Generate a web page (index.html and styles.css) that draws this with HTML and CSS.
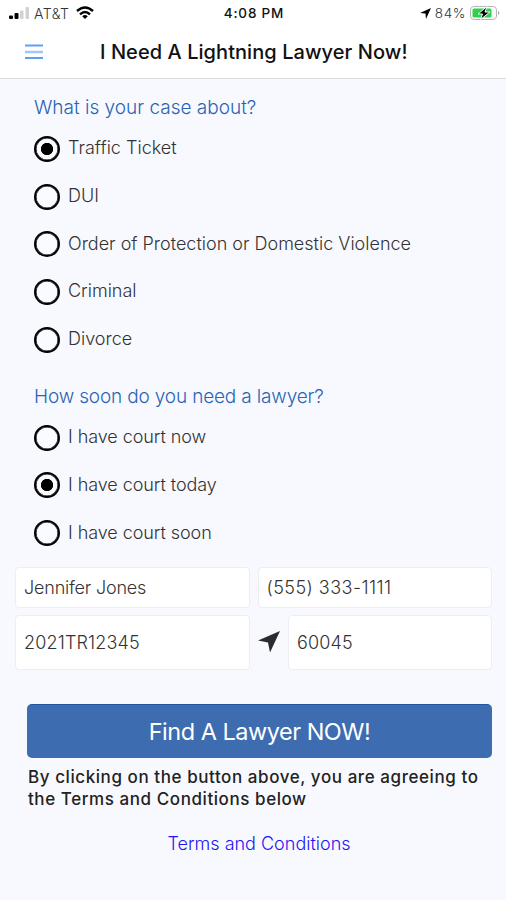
FILE: index.html
```html
<!DOCTYPE html>
<html lang="en">
<head><meta charset="utf-8"><title>I Need A Lightning Lawyer Now!</title><link rel="stylesheet" href="styles.css"></head>
<body>
<header>
<div class="status">
<div class="carrier"><svg width="22" height="13" viewBox="0 0 22 13"><rect x="1" y="8.500" width="4" height="3.500" rx="1"/><rect x="6.500" y="6" width="4" height="6" rx="1"/><rect x="12" y="3.500" width="3.500" height="8.500" rx="1" fill="#d2d2d2"/><rect x="17.500" y="0" width="3.500" height="12" rx="1" fill="#d2d2d2"/></svg><span class="network">AT&amp;T</span><svg class="wifi" width="18" height="14" viewBox="0 0 18 14" fill="none" stroke="#000" stroke-width="2.400"><path d="M1 5Q9-2 17 5M4 8.300Q9 3.700 14 8.300"/><path d="M6.200 10.200Q9 7.900 11.800 10.200L9 13Z" fill="#000" stroke="none"/></svg></div>
<span class="time">4:08 PM</span>
<div class="power"><svg width="11" height="11" viewBox="0 0 11 11"><path d="M0 5L11 0 6 11 5.500 5.500Z"/></svg><span class="percent">84%</span><svg width="30" height="15" viewBox="0 0 30 15"><rect x=".5" y=".5" width="26" height="13" rx="3.500" fill="#fff" stroke="#b5b5b5"/><rect x="2.500" y="2.500" width="19" height="9" rx="1.500" fill="#2fd050"/><path d="M28 5q3 2 0 4z" fill="#aaa"/><path d="M17 .5L8 8h4.500l-2 5.500L20 6h-5z" stroke="#fff" stroke-width="1"/></svg></div>
</div>
<div class="title"><svg class="menu" width="18" height="16" viewBox="0 0 18 16" stroke="#5d9ff2" stroke-width="2"><path d="M0 1.500H18M0 14H18"/><path d="M0 8H18" stroke="#a3c5f7" stroke-width="2.500"/></svg><h1>I Need A Lightning Lawyer Now!</h1></div>
</header>
<main>
<h2>What is your case about?</h2>
<div class="options"><label><i class="radio on"></i><span>Traffic Ticket</span></label><label><i class="radio"></i><span>DUI</span></label><label><i class="radio"></i><span>Order of Protection or Domestic Violence</span></label><label><i class="radio"></i><span>Criminal</span></label><label><i class="radio"></i><span>Divorce</span></label></div>
<h2 class="second">How soon do you need a lawyer?</h2>
<div class="options soon"><label><i class="radio"></i><span>I have court now</span></label><label><i class="radio on"></i><span>I have court today</span></label><label><i class="radio"></i><span>I have court soon</span></label></div>
<div class="fields"><div class="field name">Jennifer Jones</div><div class="field phone">(555) 333-1111</div></div>
<div class="fields case"><div class="field">2021TR12345</div><svg width="22" height="22" viewBox="0 0 22 22"><path d="M0 9.500L22 0 12 21.500 10 11.500Z" fill="#2b2b2b"/></svg><div class="field">60045</div></div>
<button>Find A Lawyer NOW!</button>
<p>By clicking on the button above, you are agreeing to<br>the Terms and Conditions below</p>
<a>Terms and Conditions</a>
</main>
</body></html>
```
FILE: styles.css
```css
*{box-sizing:border-box}
body{margin:0;height:900px;overflow:hidden;background:#f8f9ff;font-family:Inter,"Liberation Sans",sans-serif;color:#333}
header{height:79px;background:#fff;border-bottom:1px solid #dcdde1}
.status{height:26px;padding:0 6px 0 8px;display:grid;grid-template-columns:1fr auto 1fr;align-items:center;font-size:13.500px}
.carrier,.power{display:flex;align-items:center;gap:4px}
.network{font-weight:300;font-size:14px;letter-spacing:.5px}
.wifi{margin-left:2px}
.power{justify-content:flex-end}
.percent{font-weight:300;letter-spacing:.6px}
.time{font-weight:500;letter-spacing:.8px;color:#111}
.title{height:52px;display:flex;align-items:center;padding-left:25px}
.menu{margin-right:57px}
h1{margin:0;font-size:20px;font-weight:500;letter-spacing:.06px;color:#111;white-space:nowrap}
h2{margin:0;padding:17px 0 0 34px;height:46px;font-size:19px;line-height:24px;font-weight:300;color:#2864b4}
.second{height:50.500px;padding-top:22px;letter-spacing:-.16px}
.options label{height:47.700px;display:flex;align-items:center;gap:8px;padding-left:34px;font-size:18px;font-weight:300}
.options span{position:relative;top:-1px}
.soon{letter-spacing:-.07px}
.radio{width:26px;height:26px;border:2px solid #000;box-shadow:inset 0 0 0 .5px #000;border-radius:50%;background:#fafbff}
.on{background:radial-gradient(#000 0 5.800px,#fafbff 6.500px)}
.fields{display:flex;gap:8px;margin:9.500px 14px 0 15px}
.field{flex:1;height:41px;background:#fff;border:1px solid #eceef4;border-radius:4px;padding-left:8px;display:flex;align-items:center;font-size:18px;font-weight:300}
.name{letter-spacing:-.2px}
.phone{letter-spacing:.45px}
button{display:block;margin:34px 14px 0 27px;width:465px;height:54px;border:0;border-top:1px solid #20569f;border-radius:5px;background:#3d6cb1;color:#fff;font:400 23.500px Inter,sans-serif;letter-spacing:-.5px}
.case{margin-top:7.500px;align-items:center}
.case .field{height:54.500px;flex:0 0 235px;letter-spacing:.15px;padding-top:1px}
.case .field:last-child{flex:1}
p{margin:8px 0 0 28px;font-size:17px;line-height:22px;font-weight:500;letter-spacing:.57px;color:#222;white-space:nowrap}
a{display:block;text-align:center;margin-top:23px;padding-left:12px;color:#2416f0;font-size:18px;font-weight:300}
```
